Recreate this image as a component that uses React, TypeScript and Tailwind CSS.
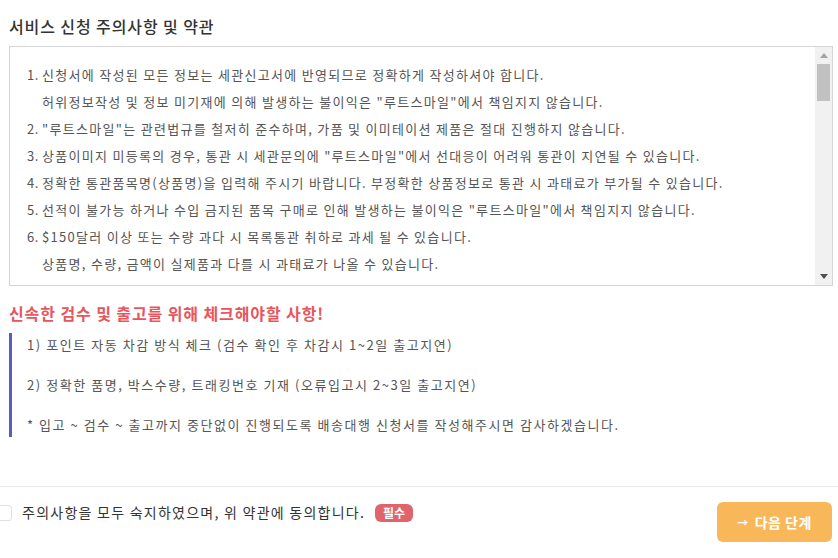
import React from "react";

const notices = [
  {
    lines: [
      "신청서에 작성된 모든 정보는 세관신고서에 반영되므로 정확하게 작성하셔야 합니다.",
      "허위정보작성 및 정보 미기재에 의해 발생하는 불이익은 \"루트스마일\"에서 책임지지 않습니다.",
    ],
  },
  { lines: ["\"루트스마일\"는 관련법규를 철저히 준수하며, 가품 및 이미테이션 제품은 절대 진행하지 않습니다."] },
  { lines: ["상품이미지 미등록의 경우, 통관 시 세관문의에 \"루트스마일\"에서 선대응이 어려워 통관이 지연될 수 있습니다."] },
  { lines: ["정확한 통관품목명(상품명)을 입력해 주시기 바랍니다. 부정확한 상품정보로 통관 시 과태료가 부가될 수 있습니다."] },
  { lines: ["선적이 불가능 하거나 수입 금지된 품목 구매로 인해 발생하는 불이익은 \"루트스마일\"에서 책임지지 않습니다."] },
  {
    lines: [
      "$150달러 이상 또는 수량 과다 시 목록통관 취하로 과세 될 수 있습니다.",
      "상품명, 수량, 금액이 실제품과 다를 시 과태료가 나올 수 있습니다.",
    ],
  },
];

const checks = [
  "1) 포인트 자동 차감 방식 체크 (검수 확인 후 차감시 1~2일 출고지연)",
  "2) 정확한 품명, 박스수량, 트래킹번호 기재 (오류입고시 2~3일 출고지연)",
  "* 입고 ~ 검수 ~ 출고까지 중단없이 진행되도록 배송대행 신청서를 작성해주시면 감사하겠습니다.",
];

function ScrollBar() {
  return (
    <div className="flex w-[17px] shrink-0 flex-col items-center bg-[#f1f1f1]">
      <div className="flex h-[17px] w-full items-center justify-center">
        <svg width="8" height="5" viewBox="0 0 8 5">
          <path d="M0 5 L4 0 L8 5 Z" fill="#a3a3a3" />
        </svg>
      </div>
      <div className="h-[37px] w-[13px] bg-[#c1c1c1]" />
      <div className="flex-1" />
      <div className="flex h-[17px] w-full items-center justify-center">
        <svg width="8" height="5" viewBox="0 0 8 5">
          <path d="M0 0 L8 0 L4 5 Z" fill="#505050" />
        </svg>
      </div>
    </div>
  );
}

export default function App() {
  return (
    <div className="min-h-[558px] w-[838px] overflow-hidden bg-white font-['Noto_Sans_CJK_KR','Noto_Sans',sans-serif]">
      <div className="pl-[9px] pr-[5px] pt-[14px]">
        <h2 className="mb-[8px] text-[16px] leading-[24px] font-medium tracking-[0.9px] text-[#333]">
          서비스 신청 주의사항 및 약관
        </h2>

        <div className="flex h-[240px] border border-[#d5d5d5] bg-white">
          <div className="flex-1 overflow-hidden">
            <ol className="list-decimal pl-[32px] pt-[14px] text-[13px] leading-[27px] tracking-[1.3px] text-[#555] marker:tracking-[0.4px]">
              {notices.map((n, i) => (
                <li key={i}>
                  {n.lines.map((l, j) => (
                    <div key={j}>{l}</div>
                  ))}
                </li>
              ))}
            </ol>
          </div>
          <ScrollBar />
        </div>

        <h3 className="mt-[15px] mb-[8px] text-[16px] leading-[24px] font-bold tracking-[0.9px] text-[#e7565d]">
          신속한 검수 및 출고를 위해 체크해야할 사항!
        </h3>

        <div className="flex flex-col gap-[16px] border-l-[3px] border-[#5c5cc0] pl-[15px] text-[13px] leading-[24px] tracking-[1.55px] text-[#555]">
          {checks.map((c) => (
            <p key={c}>{c}</p>
          ))}
        </div>
      </div>

      <div className="mt-[49px] border-t border-[#eaeaea] pt-[15px]">
        <div className="flex items-start justify-between pr-[6px]">
          <label className="flex items-center gap-[10px]">
            <span className="ml-[-4px] h-[16px] w-[16px] rounded-[3px] border border-[#dcdfe6] bg-white" />
            <span className="text-[14px] leading-[21px] tracking-[1.25px] text-[#333]">
              주의사항을 모두 숙지하였으며, 위 약관에 동의합니다.
            </span>
            <span className="rounded-[6px] bg-[#e0646c] px-[8px] text-[12px] leading-[18px] font-bold text-white">
              필수
            </span>
          </label>
          <button className="flex h-[40px] w-[115px] items-center justify-center gap-[6px] rounded-[6px] bg-[#f8b85a] text-[14px] font-bold tracking-[0.5px] text-white">
            <span className="text-[11px]">→</span>
            다음 단계
          </button>
        </div>
      </div>
    </div>
  );
}
